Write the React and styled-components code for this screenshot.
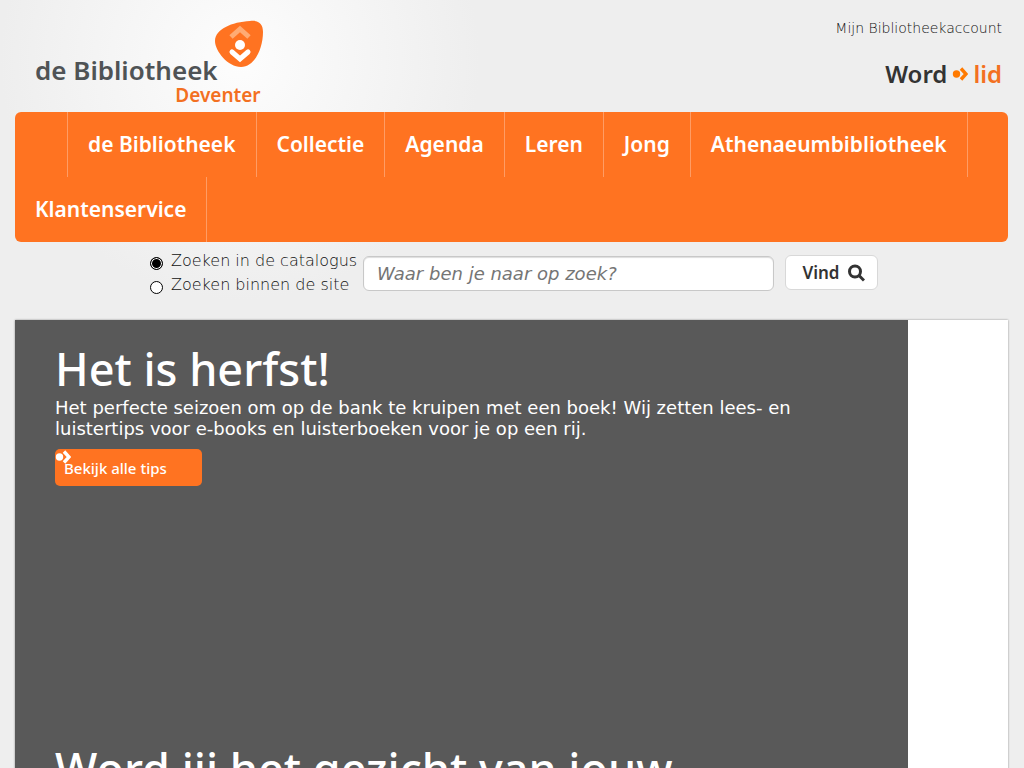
import React from "react";
import styled, { createGlobalStyle } from "styled-components";

const GlobalStyle = createGlobalStyle`
  * {
    box-sizing: border-box;
  }

  body {
    margin: 0;
    background: #eeeeee radial-gradient(circle at 240px 60px, #fdfdfd 0, #eeeeee 240px) no-repeat;
    color: #333333;
    font-family: "DejaVu Sans", Verdana, sans-serif;
    font-size: 16px;
  }

  a {
    color: inherit;
    text-decoration: none;
  }
`;

const display = `"Noto Sans", "Open Sans", sans-serif`;

const Page = styled.div`
  padding: 0 16px 0 15px;
`;

const Header = styled.header`
  display: flex;
  justify-content: space-between;
  height: 112px;
  padding: 20px 6px 0 20px;
`;

const Logo = styled.a`
  display: grid;
  grid-template-columns: auto 48px;
  grid-template-rows: 62px 24px;
  font-family: ${display};
`;

const LogoName = styled.span`
  align-self: end;
  margin-right: -3px;
  color: #4f5355;
  font-size: 26px;
  font-weight: 600;
  line-height: 24px;
  white-space: nowrap;
`;

const LogoPlace = styled.span`
  grid-column: 1 / 3;
  justify-self: end;
  padding-right: 2px;
  color: #f37021;
  font-size: 19px;
  font-weight: 600;
  line-height: 26px;
`;

const Account = styled.div`
  display: flex;
  flex-direction: column;
  align-items: flex-end;
`;

const AccountLink = styled.a`
  color: #111111;
  font-size: 14px;
  font-weight: 200;
  line-height: 16px;
`;

const JoinLink = styled.a`
  display: flex;
  align-items: center;
  gap: 5px;
  margin-top: 22px;
  font-family: ${display};
  font-size: 24px;
  font-weight: 600;
  line-height: 32px;
`;

const Accent = styled.span`
  color: #f37021;
`;

const Nav = styled.nav`
  border-radius: 6px;
  background: #ff7321;
`;

const NavList = styled.ul`
  display: flex;
  flex-wrap: wrap;
  margin: 0;
  padding: 0;
  list-style: none;
`;

const NavItem = styled.li`
  min-width: 53px;
  height: 65px;
  border-right: 1px solid #ff9c64;
`;

const NavLink = styled.a`
  display: block;
  padding: 0 20px;
  color: #ffffff;
  font-family: ${display};
  font-size: 21px;
  font-weight: 600;
  line-height: 64px;
`;

const SearchForm = styled.form`
  display: flex;
  align-items: flex-start;
  height: 78px;
  padding: 7px 130px 0 135px;
`;

const Options = styled.div`
  display: flex;
  flex-direction: column;
  flex-shrink: 0;
  width: 213px;
`;

const Option = styled.label`
  display: flex;
  gap: 8px;
  color: #111111;
  font-weight: 200;
  line-height: 24px;
  white-space: nowrap;
`;

const Radio = styled.input`
  appearance: none;
  width: 13px;
  height: 13px;
  margin: 8px 0 0;
  border: 1px solid #000000;
  border-radius: 50%;
  background: #ffffff;

  &:checked {
    background: #000000;
    box-shadow: inset 0 0 0 1px #ffffff;
  }
`;

const SearchInput = styled.input`
  flex: 1;
  min-width: 0;
  height: 35px;
  margin-top: 7px;
  padding: 0 13px;
  border: 1px solid #c8c8c8;
  border-radius: 6px;
  background: #ffffff;
  box-shadow: inset 0 1px 1px #dddddd;
  font-family: "DejaVu Sans", Verdana, sans-serif;
  font-size: 18px;
  font-style: italic;

  &::placeholder {
    color: #757575;
  }
`;

const SearchButton = styled.button`
  display: flex;
  align-items: center;
  justify-content: center;
  gap: 7px;
  width: 93px;
  height: 35px;
  margin: 6px 0 0 11px;
  padding: 0 0 0 4px;
  border: 1px solid #d8d8d8;
  border-radius: 6px;
  background: #ffffff;
  color: #333333;
  font-family: ${display};
  font-size: 17px;
  font-weight: 600;
`;

const Main = styled.main`
  padding-right: 100px;
  background: #ffffff;
  box-shadow: 0 0 2px rgba(0, 0, 0, 0.4);
`;

const Slide = styled.section`
  min-height: 400px;
  padding: 20px 100px 0 40px;
  background: #595959;
  color: #ffffff;
`;

const SlideTitle = styled.h2`
  margin: 0;
  font-family: ${display};
  font-size: 45px;
  font-weight: 500;
  line-height: 57px;
`;

const SlideText = styled.p`
  margin: 0;
  font-size: 18px;
  line-height: 21px;
`;

const SlideButton = styled.a`
  display: flex;
  align-items: flex-start;
  width: 147px;
  height: 37px;
  margin-top: 10px;
  border-radius: 5px;
  background: #ff7321;
  font-family: ${display};
  font-size: 15px;
  font-weight: 500;
  line-height: 38px;
`;

const ButtonLabel = styled.span`
  margin-left: -7px;
`;

const LogoMark = () => (
  <svg width="48" height="48" viewBox="0 0 48 48" aria-hidden="true">
    <path
      d="M35 1C44 0 48 4 48 12C48 28 40 47 26 47C13 47 0 31 0 21C0 9 17 2 35 1Z"
      fill="#ff7321"
    />
    <path
      d="M16 17L25 9L34 17"
      fill="none"
      stroke="#ffab73"
      strokeWidth="5"
    />
    <circle cx="25" cy="25" r="5" fill="#ffffff" />
    <path
      d="M17 32L25 39L33 32"
      fill="none"
      stroke="#ffffff"
      strokeWidth="5"
      strokeLinecap="round"
    />
  </svg>
);

const DotArrow = ({ color }) => (
  <svg width="16" height="16" viewBox="0 0 16 16" aria-hidden="true">
    <circle cx="4.5" cy="8" r="3.7" fill={color} />
    <path
      d="M9 2.5L14 8L9 13.5"
      fill="none"
      stroke={color}
      strokeWidth="3.4"
    />
  </svg>
);

const SearchIcon = () => (
  <svg width="18" height="18" viewBox="0 0 18 18" aria-hidden="true">
    <circle cx="8" cy="7.5" r="5.5" fill="none" stroke="#333333" strokeWidth="3" />
    <path d="M12 11.5L17 16.5" stroke="#333333" strokeWidth="3" />
  </svg>
);

const navItems = [
  "",
  "de Bibliotheek",
  "Collectie",
  "Agenda",
  "Leren",
  "Jong",
  "Athenaeumbibliotheek",
  "Klantenservice",
];

const App = () => {
  return (
    <>
      <GlobalStyle />
      <Page>
        <Header>
          <Logo href="#">
            <LogoName>de Bibliotheek</LogoName>
            <LogoMark />
            <LogoPlace>Deventer</LogoPlace>
          </Logo>
          <Account>
            <AccountLink href="#">Mijn Bibliotheekaccount</AccountLink>
            <JoinLink href="#">
              Word
              <DotArrow color="#ff7a00" />
              <Accent>lid</Accent>
            </JoinLink>
          </Account>
        </Header>
        <Nav>
          <NavList>
            {navItems.map((item) => (
              <NavItem key={item}>
                {item && <NavLink href="#">{item}</NavLink>}
              </NavItem>
            ))}
          </NavList>
        </Nav>
        <SearchForm>
          <Options>
            <Option>
              <Radio type="radio" name="scope" defaultChecked />
              Zoeken in de catalogus
            </Option>
            <Option>
              <Radio type="radio" name="scope" />
              Zoeken binnen de site
            </Option>
          </Options>
          <SearchInput
            type="text"
            aria-label="Zoeken"
            placeholder="Waar ben je naar op zoek?"
          />
          <SearchButton type="button">
            Vind
            <SearchIcon />
          </SearchButton>
        </SearchForm>
        <Main>
          <Slide>
            <SlideTitle>Het is herfst!</SlideTitle>
            <SlideText>
              Het perfecte seizoen om op de bank te kruipen met een boek! Wij
              zetten lees- en luistertips voor e-books en luisterboeken voor je
              op een rij.
            </SlideText>
            <SlideButton href="#">
              <DotArrow color="#ffffff" />
              <ButtonLabel>Bekijk alle tips</ButtonLabel>
            </SlideButton>
          </Slide>
          <Slide>
            <SlideTitle>Word jij het gezicht van jouw</SlideTitle>
          </Slide>
        </Main>
      </Page>
    </>
  );
};

export default App;
